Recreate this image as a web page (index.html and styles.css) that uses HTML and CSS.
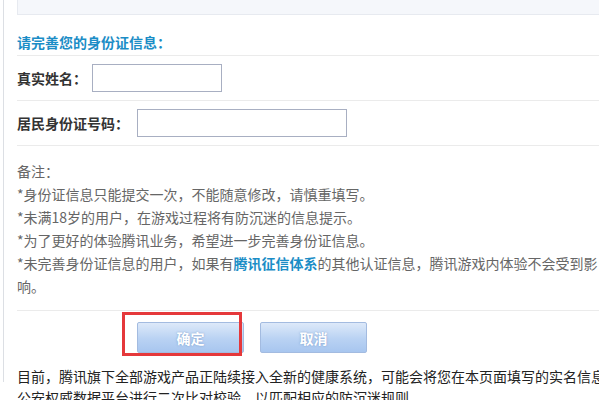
FILE: index.html
```html
<!DOCTYPE html>
<html lang="zh-CN">
<head>
<meta charset="utf-8">
<title>完善身份证信息</title>
<link rel="stylesheet" href="styles.css">
</head>
<body>
<div class="panel">
  <div class="topbar"></div>
  <div class="title">请完善您的身份证信息：</div>
  <div class="row">
    <label class="label">真实姓名：</label>
    <input class="field field-name" type="text">
  </div>
  <div class="row">
    <label class="label">居民身份证号码：</label>
    <input class="field field-id" type="text">
  </div>
  <div class="notes">
    <div>备注：</div>
    <div>*身份证信息只能提交一次，不能随意修改，请慎重填写。</div>
    <div>*未满18岁的用户，在游戏过程将有防沉迷的信息提示。</div>
    <div>*为了更好的体验腾讯业务，希望进一步完善身份证信息。</div>
    <div>*未完善身份证信息的用户，如果有<a class="link">腾讯征信体系</a>的其他认证信息，腾讯游戏内体验不会受到影响。</div>
  </div>
  <div class="actions">
    <button class="btn" type="button">确定</button>
    <button class="btn" type="button">取消</button>
    <div class="highlight"></div>
  </div>
</div>
<p class="footer">目前，腾讯旗下全部游戏产品正陆续接入全新的健康系统，可能会将您在本页面填写的实名信息公安权威数据平台进行二次比对校验，以匹配相应的防沉迷规则。</p>
</body>
</html>
```
FILE: styles.css
```css
html, body {
  margin: 0;
  padding: 0;
  background: #fff;
  overflow: hidden;
}
body {
  font-family: "Noto Sans CJK SC", "Liberation Sans", sans-serif;
  font-size: 14px;
  color: #333;
}
.panel {
  margin-left: 3px;
  width: 640px;
  border-left: 1px solid #dcdfe4;
  padding: 0 0 29px 13px;
}
.topbar {
  height: 14px;
  background: #f5f7fb;
  border: 1px solid #e7eaf0;
  border-top: none;
}
.title {
  padding: 18px 0 4px;
  line-height: 18px;
  font-weight: bold;
  color: #1b8dc6;
  border-bottom: 1px solid #ebebeb;
}
.row {
  height: 44px;
  display: flex;
  align-items: center;
  border-bottom: 1px solid #ebebeb;
}
.label {
  font-weight: bold;
  color: #333;
  line-height: 18px;
}
.field {
  box-sizing: border-box;
  height: 28px;
  border: 1px solid #a8afc2;
  background: #fff;
  margin: 0;
  padding: 0 4px;
  outline: none;
}
.field-name {
  width: 130px;
  margin-left: 5px;
}
.field-id {
  width: 210px;
  margin-left: 8px;
}
.notes {
  padding: 14px 0 12px;
  line-height: 23px;
  color: #666;
  border-bottom: 1px solid #ebebeb;
}
.notes div {
  width: 588px;
}
.link {
  color: #1b8dc6;
  font-weight: bold;
  text-decoration: none;
}
.actions {
  position: relative;
  display: flex;
  gap: 16px;
  padding: 11px 0 0 120px;
}
.btn {
  box-sizing: border-box;
  width: 107px;
  height: 31px;
  margin: 0;
  padding: 0;
  border: 1px solid #a3bbe0;
  border-radius: 2px;
  background: linear-gradient(#dde9f9, #b9d2f3 55%, #a8c6ef);
  color: #fff;
  font-family: "Noto Sans CJK SC", sans-serif;
  font-size: 14px;
  font-weight: bold;
  text-shadow: 0 0 2px rgba(70, 110, 170, 0.55);
}
.highlight {
  position: absolute;
  left: 105px;
  top: 1px;
  width: 120px;
  height: 44px;
  box-sizing: border-box;
  border: 3px solid #e5383b;
}
.footer {
  width: 592px;
  margin: -16px 0 0 17px;
  font-size: 14px;
  line-height: 21px;
  color: #222;
}
```
